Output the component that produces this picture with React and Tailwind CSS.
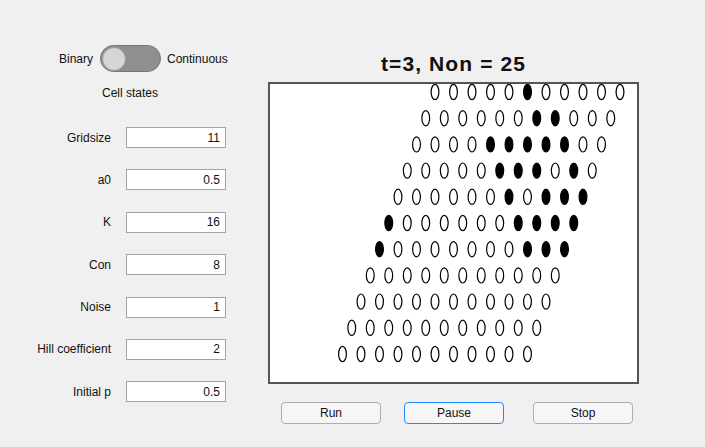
import React from "react";

const fields = [
  { label: "Gridsize", value: "11" },
  { label: "a0", value: "0.5" },
  { label: "K", value: "16" },
  { label: "Con", value: "8" },
  { label: "Noise", value: "1" },
  { label: "Hill coefficient", value: "2" },
  { label: "Initial p", value: "0.5" },
];

// filled cells per row (row 0 at top), columns left to right
const filled = [
  [5],
  [6, 7],
  [4, 5, 6, 7, 8],
  [5, 6, 7, 9],
  [6, 8, 9, 10],
  [0, 7, 8, 9, 10],
  [0, 8, 9, 10],
  [],
  [],
  [],
  [],
];

function Grid() {
  const cells = [];
  for (let r = 0; r < 11; r++) {
    for (let c = 0; c < 11; c++) {
      const cx = 435 - 9.25 * r + 18.5 * c - 270;
      const cy = 92 + 26.2 * r - 84;
      const on = filled[r].includes(c);
      cells.push(
        <ellipse
          key={r + "-" + c}
          cx={cx}
          cy={cy}
          rx={3.9}
          ry={7.6}
          fill={on ? "#000" : "#fff"}
          stroke="#000"
          strokeWidth={1.2}
        />
      );
    }
  }
  return (
    <svg width="367" height="298" viewBox="0 0 367 298">
      {cells}
    </svg>
  );
}

function Field({ label, value }) {
  return (
    <div className="flex items-center h-[21px]">
      <div className="w-[111px] text-right text-[12px] text-[#111]">{label}</div>
      <div className="ml-[15px] w-[100px] h-[21px] border border-[#a3a3a3] bg-white flex items-center justify-end pr-[5px] text-[12px] text-[#111]">
        {value}
      </div>
    </div>
  );
}

export default function App() {
  return (
    <div
      className="w-[705px] h-[447px] bg-[#f0f0f0] flex overflow-hidden"
      style={{ fontFamily: '"Liberation Sans", Arial, sans-serif' }}
    >
      <div className="w-[268px] shrink-0 flex flex-col">
        <div className="mt-[45px] h-[27px] flex items-center pl-[59px] text-[12px] text-[#111]">
          <span>Binary</span>
          <div className="ml-[7px] w-[61px] h-[27px] rounded-full bg-[#8f8f91] border border-[#76767a] flex items-center pl-[1px]">
            <div className="w-[24px] h-[24px] rounded-full bg-[#d6d6d6] border border-[#9c9c9c]" />
          </div>
          <span className="ml-[6px]">Continuous</span>
        </div>
        <div className="mt-[14px] pl-[102px] h-[14px] leading-[14px] text-[12px] text-[#111]">Cell states</div>
        <div className="mt-[27px] flex flex-col gap-[21.4px]">
          {fields.map((f) => (
            <Field key={f.label} label={f.label} value={f.value} />
          ))}
        </div>
      </div>
      <div className="w-[371px] shrink-0 flex flex-col">
        <div className="mt-[52px] h-[24px] leading-[24px] text-center text-[21px] font-bold tracking-[1.1px] text-[#111]">
          t=3, Non = 25
        </div>
        <div className="mt-[6px] w-[371px] h-[302px] border-2 border-[#555] bg-white">
          <Grid />
        </div>
        <div className="mt-[18px] flex text-[12px] text-[#111]">
          <button className="ml-[13px] w-[100px] h-[22px] rounded-[4px] border border-[#adadad] bg-[#f6f6f6]">Run</button>
          <button className="ml-[23px] w-[100px] h-[22px] rounded-[4px] border border-[#1a8cff] bg-[#f6f6f6]">Pause</button>
          <button className="ml-[29px] w-[100px] h-[22px] rounded-[4px] border border-[#adadad] bg-[#f6f6f6]">Stop</button>
        </div>
      </div>
    </div>
  );
}
